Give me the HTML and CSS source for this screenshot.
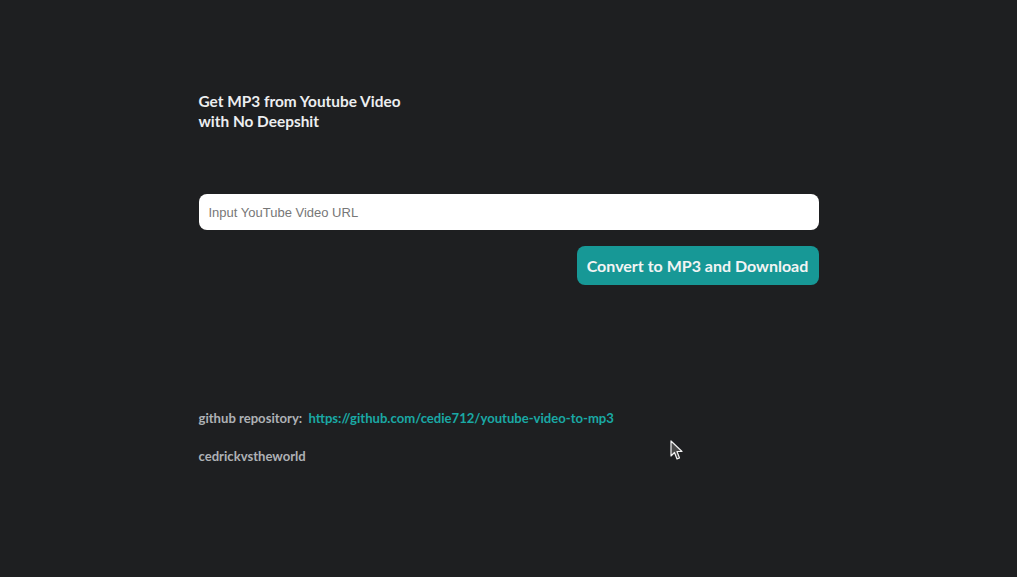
FILE: index.html
```html
<!DOCTYPE html>
<html>
<head>
<meta charset="utf-8">
<link rel="stylesheet" href="styles.css">
</head>
<body>
<main class="page">
  <h1 class="title">Get MP3 from Youtube Video<br>with No Deepshit</h1>
  <form class="form">
    <input class="url" type="text" placeholder="Input YouTube Video URL">
    <div class="actions">
      <button class="convert" type="button">Convert to MP3 and Download</button>
    </div>
  </form>
  <footer class="footer">
    <p class="repo">github repository: <a class="link" href="#">https://github.com/cedie712/youtube-video-to-mp3</a></p>
    <p class="author">cedrickvstheworld</p>
  </footer>
</main>
<svg class="cursor" width="14" height="22" viewBox="0 0 14 22"><path d="M1 1 L1 16 L4.5 12.5 L7 19 L9.5 18 L7 11.5 L12 11.5 Z" fill="#4a4a4a" stroke="#f2f2f2" stroke-width="1.2" stroke-linejoin="round"/></svg>
</body>
</html>
```
FILE: styles.css
```css
html, body {
  margin: 0;
  padding: 0;
  background: #1e1f21;
  height: 100%;
}
body {
  font-family: Lato, "Noto Sans", sans-serif;
}
.page {
  width: 620px;
  margin: 0 auto;
  padding-top: 91px;
  display: flex;
  flex-direction: column;
}
.title {
  margin: 0;
  font-size: 15.4px;
  font-weight: 700;
  line-height: 20px;
  color: #eceef0;
}
.form {
  margin-top: 63px;
  display: flex;
  flex-direction: column;
  gap: 16px;
}
.url {
  box-sizing: border-box;
  height: 36px;
  width: 100%;
  border: none;
  border-radius: 8px;
  background: #ffffff;
  padding: 0 10px;
  font-family: "Liberation Sans", Arial, sans-serif;
  font-size: 13px;
  outline: none;
}
.url::placeholder {
  color: #777777;
}
.actions {
  display: flex;
  justify-content: flex-end;
}
.convert {
  height: 39px;
  width: 242px;
  border: none;
  border-radius: 8px;
  background: #179896;
  color: #f2f4f4;
  font-family: Lato, "Noto Sans", sans-serif;
  font-size: 16px;
  font-weight: 700;
  padding: 0;
  cursor: pointer;
}
.footer {
  margin-top: 123px;
  display: flex;
  flex-direction: column;
  gap: 18px;
}
.footer p {
  margin: 0;
  font-size: 13.1px;
  font-weight: 700;
  line-height: 20px;
  color: #aeb1b5;
}
.link {
  color: #1aa8a4;
  text-decoration: none;
  margin-left: 3px;
}
.cursor {
  position: absolute;
  left: 670px;
  top: 440px;
}
```
